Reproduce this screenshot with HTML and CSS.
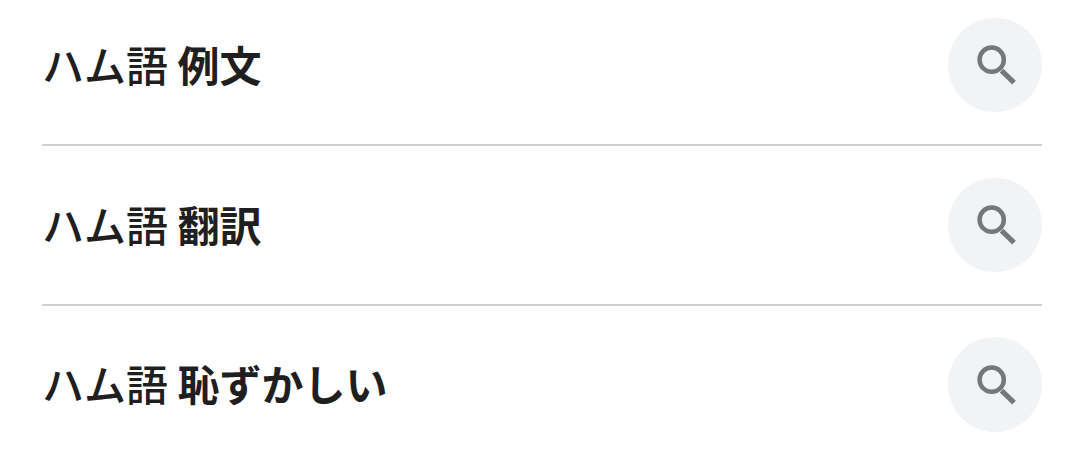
FILE: index.html
```html
<!DOCTYPE html>
<html lang="ja">
<head>
  <meta charset="UTF-8">
  <meta name="viewport" content="width=device-width, initial-scale=1.0">
  <title>ハム語</title>
  <link rel="stylesheet" href="styles.css">
</head>
<body>
  <svg class="sprite" aria-hidden="true">
    <symbol id="search" viewBox="0 0 52 52">
      <circle cx="22.7" cy="20.7" r="12.1"/>
      <path d="M32.6 31.6L45 43.6" stroke-width="5.2"/>
    </symbol>
  </svg>
  <div class="related">
    <a class="item" href="#">
      <span class="query">ハム語 <b>例文</b></span>
      <span class="circle"><svg class="icon"><use href="#search"/></svg></span>
    </a>
    <a class="item" href="#">
      <span class="query">ハム語 <b>翻訳</b></span>
      <span class="circle"><svg class="icon"><use href="#search"/></svg></span>
    </a>
    <a class="item" href="#">
      <span class="query">ハム語 <b>恥ずかしい</b></span>
      <span class="circle"><svg class="icon"><use href="#search"/></svg></span>
    </a>
  </div>
</body>
</html>
```
FILE: styles.css
```css
body {
  margin: 0;
  background: #fff;
  color: #1f1f1f;
  font-family: Roboto, "Noto Sans CJK JP", sans-serif;
}
.sprite {
  display: none;
}
.related {
  padding: 0 42px;
  margin-top: -14px;
}
.item {
  display: flex;
  align-items: center;
  justify-content: space-between;
  box-sizing: border-box;
  height: 160px;
  border-bottom: 2px solid #d2d2d2;
  color: inherit;
  text-decoration: none;
}
.item:last-child {
  height: 157px;
  border-bottom: none;
}
.query {
  padding-top: 5px;
  font-size: 42px;
  font-weight: 500;
  line-height: 60px;
  word-spacing: -1px;
  white-space: nowrap;
}
.query b {
  font-weight: bold;
}
.circle {
  display: flex;
  align-items: center;
  justify-content: center;
  width: 94px;
  height: 94.6px;
  border-radius: 50%;
  background: #f1f3f4;
}
.icon {
  width: 52px;
  height: 52px;
  fill: none;
  stroke: #757778;
  stroke-width: 4.5;
}
```
